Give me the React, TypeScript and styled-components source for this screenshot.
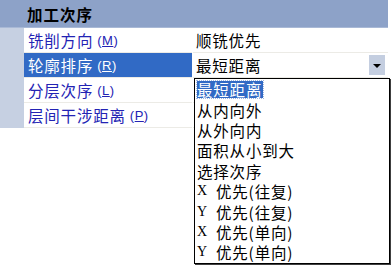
import styled, { createGlobalStyle } from "styled-components";

const GlobalStyle = createGlobalStyle`
  html, body {
    margin: 0;
    padding: 0;
    background: #ffffff;
  }
  body {
    font-family: "Noto Sans CJK SC", "Liberation Sans", sans-serif;
  }
`;

const rows = [
  { label: "铣削方向", key: "M", value: "顺铣优先" },
  { label: "轮廓排序", key: "R", value: "最短距离", selected: true },
  { label: "分层次序", key: "L", value: "" },
  { label: "层间干涉距离", key: "P", value: "" },
];

const options = [
  { text: "最短距离" },
  { text: "从内向外" },
  { text: "从外向内" },
  { text: "面积从小到大" },
  { text: "选择次序" },
  { axis: "X", text: "优先(往复)" },
  { axis: "Y", text: "优先(往复)" },
  { axis: "X", text: "优先(单向)" },
  { axis: "Y", text: "优先(单向)" },
];

const App = () => {
  return (
    <>
      <GlobalStyle />
      <Page>
        <Grid>
          <Header>加工次序</Header>
          {rows.map((row) => (
            <Row key={row.key}>
              <Gutter />
              <Label selected={row.selected}>
                {row.label}
                <Key>
                  (<u>{row.key}</u>)
                </Key>
              </Label>
              <Value>
                {row.value}
                {row.selected && (
                  <DropButton>
                    <Arrow />
                  </DropButton>
                )}
              </Value>
            </Row>
          ))}
        </Grid>
        <List>
          {options.map((opt, i) => (
            <Item key={i}>
              <ItemText active={i === 0}>
                {opt.axis && <Axis>{opt.axis}</Axis>}
                {opt.text}
              </ItemText>
            </Item>
          ))}
        </List>
      </Page>
    </>
  );
};

const Page = styled.div`
  position: relative;
  width: 391px;
  height: 270px;
  background: #ffffff;
  overflow: hidden;
`;
const Grid = styled.div`
  width: 388px;
  display: flex;
  flex-direction: column;
`;
const Header = styled.div`
  height: 27px;
  border-bottom: 1px solid #a9b9d6;
  background: #8da2c8;
  padding-left: 27px;
  display: flex;
  align-items: center;
  font-size: 15.5px;
  font-weight: 700;
  letter-spacing: 1px;
  color: #000000;
`;
const Row = styled.div`
  height: 25px;
  display: flex;
`;
const Gutter = styled.div`
  width: 24px;
  background: #c6d0e2;
`;
const Label = styled.div<{ selected?: boolean }>`
  width: 164px;
  padding-left: 4px;
  margin-right: 1px;
  border-bottom: 1px solid #ecebe6;
  display: flex;
  align-items: center;
  font-size: 15.5px;
  letter-spacing: 0.8px;
  color: ${(p) => (p.selected ? "#ffffff" : "#2323b4")};
  background: ${(p) => (p.selected ? "#316ac5" : "#ffffff")};
`;
const Key = styled.span`
  margin-left: 4px;
  font-family: "Liberation Sans", sans-serif;
  font-size: 13px;
  letter-spacing: 0.5px;
  u {
    text-underline-offset: 1px;
  }
`;
const Value = styled.div`
  flex: 1;
  padding-left: 3px;
  border-bottom: 1px solid #ecebe6;
  display: flex;
  align-items: center;
  font-size: 15.5px;
  letter-spacing: 0.8px;
  color: #000000;
  position: relative;
`;
const DropButton = styled.div`
  position: absolute;
  right: 3px;
  top: 2px;
  width: 16px;
  height: 20px;
  background: #c4cee0;
  display: flex;
  align-items: center;
  justify-content: center;
`;
const Arrow = styled.div`
  width: 0;
  height: 0;
  border-left: 4px solid transparent;
  border-right: 4px solid transparent;
  border-top: 4px solid #000000;
  margin-top: 2px;
`;
const List = styled.div`
  position: absolute;
  left: 194px;
  top: 78px;
  width: 192px;
  height: 184px;
  border: 1px solid #000000;
  box-shadow: 1px 1px 0 #404040;
  background: #ffffff;
  padding-left: 2px;
`;
const Item = styled.div`
  height: 20.4px;
  display: flex;
  align-items: center;
  font-size: 15.5px;
  letter-spacing: 0.8px;
  color: #000000;
`;
const ItemText = styled.span<{ active?: boolean }>`
  display: inline-flex;
  align-items: center;
  height: 17px;
  padding-right: 1px;
  background: ${(p) => (p.active ? "#316ac5" : "transparent")};
  color: ${(p) => (p.active ? "#ffffff" : "#000000")};
  outline: ${(p) => (p.active ? "1px dotted #9fb6e0" : "none")};
`;
const Axis = styled.span`
  font-family: "Liberation Serif", serif;
  font-size: 14px;
  width: 19px;
  letter-spacing: 0;
`;

export default App;
